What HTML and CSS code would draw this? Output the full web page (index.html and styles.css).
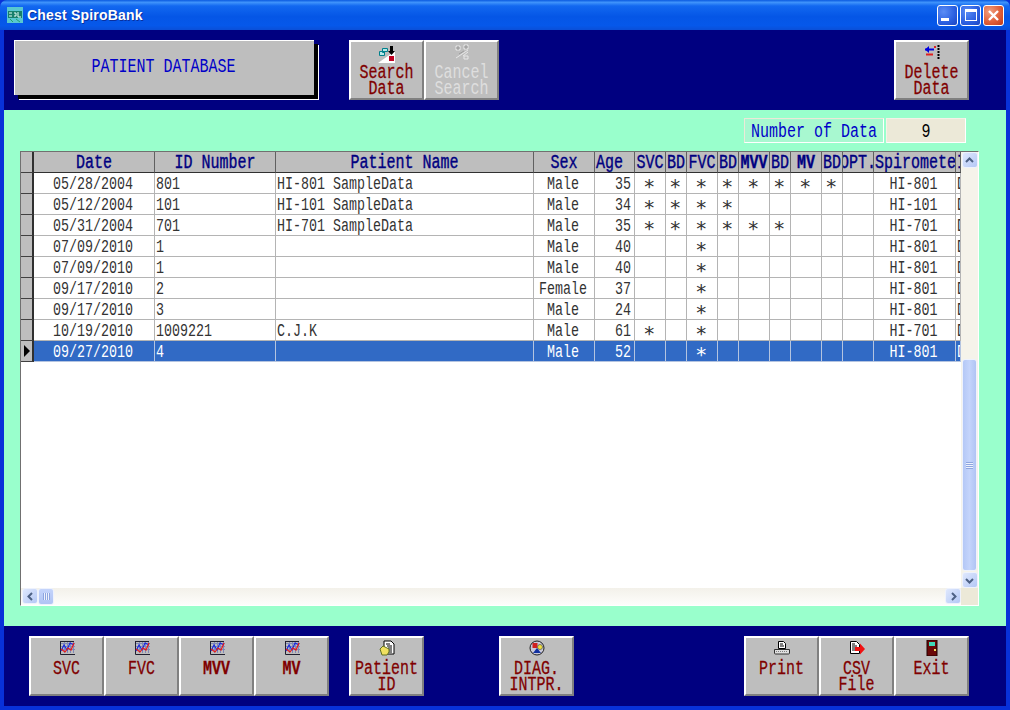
FILE: index.html
```html
<!DOCTYPE html>
<html lang="en">
<head>
    <meta charset="UTF-8">
    <title>Chest SpiroBank</title>
    <link rel="stylesheet" href="styles.css">
</head>
<body>
<svg class="defs" width="0" height="0">
    <symbol id="chart" viewBox="0 0 16 16">
        <path d="M2 3.500h14M2 6.500h14M2 9.500h14M5.500 1v12M8.500 1v12M11.500 1v12M14.500 1v12" stroke="#8088b8" stroke-width="1" fill="none"/>
        <path d="M1 1.500h14M1.500 1v13.500H16" stroke="#202030" stroke-width="1" fill="none"/>
        <path d="M2 11l3-6 3 5 3-7 4 2" stroke="#1828e0" stroke-width="1.200" fill="none"/>
        <path d="M2 9l4 3 3-4 3 2 3-7" stroke="#e81818" stroke-width="1.200" fill="none"/>
    </symbol>
</svg>
<div class="window">
    <div class="titlebar">
        <svg class="app-icon" width="16" height="16" viewBox="0 0 16 16">
            <rect width="16" height="16" fill="#58c8d0"/>
            <rect x="1" y="4" width="14" height="7" fill="#18806c"/>
            <path d="M2 6h3M2 9h3M7 6h2v3H7M11 5v5h3" stroke="#e8fff8" fill="none"/>
            <path d="M3 12l3 3M9 12l4 3" stroke="#20a070"/>
        </svg>
        <span class="title-text">Chest SpiroBank</span>
        <div class="win-buttons">
            <div class="win-btn"><span class="min-mark"></span></div>
            <div class="win-btn"><span class="max-mark"></span></div>
            <div class="win-btn win-close">
                <svg width="13" height="13" viewBox="0 0 13 13"><path d="M2 2l9 9M11 2l-9 9" stroke="#fff" stroke-width="2.400"/></svg>
            </div>
        </div>
    </div>

    <div class="top-band">
        <div class="db-title"><span class="tall">PATIENT DATABASE</span></div>
        <div class="tool-group">
            <button class="tool">
                <svg class="icon icon-big" viewBox="0 0 18 18">
                    <path d="M0 18L17 6v12z" fill="#fff"/>
                    <path d="M1.500 6.500h5v4h-5zM4.500 3.500h5v3h-3v1h-2z" fill="#b8e8e8" stroke="#00808c"/>
                    <path d="M12 1h3v5h2l-3.500 4L10 6h2z" fill="#000"/>
                    <rect x="11" y="11" width="5" height="5" fill="#c00020"/>
                </svg>
                <span class="label"><span class="tall">Search</span><span class="tall">Data</span></span>
            </button>
            <button class="tool tool-off">
                <svg class="icon" viewBox="0 0 16 16">
                    <path d="M2 2h4v4H2zM10 1h4v4h-4zM2 14L14 6M9 12l5-4M10 12h4v3h-4z" fill="none" stroke="#e8e8e8"/>
                    <path d="M3 3h2v2H3zM11 2h2v2h-2zM5 10l5-3" fill="none" stroke="#9c9c9c"/>
                </svg>
                <span class="label"><span class="tall">Cancel</span><span class="tall">Search</span></span>
            </button>
        </div>
        <button class="tool push-right">
            <svg class="icon" viewBox="0 0 16 16">
                <path d="M1 5.500h9" stroke="#0000e0" stroke-width="2"/>
                <path d="M5 2v7L1 5.500z" fill="#0000e0"/>
                <path d="M2 10.500h7" stroke="#e02020" stroke-width="2"/>
                <path d="M10 2h2v2h-2z" fill="#e02020"/>
                <path d="M14.500 1v14" stroke="#000" stroke-width="2" stroke-dasharray="2 1"/>
            </svg>
            <span class="label"><span class="tall">Delete</span><span class="tall">Data</span></span>
        </button>
    </div>

    <div class="main-panel">
        <div class="count-row">
            <div class="count-label"><span class="tall">Number of Data</span></div>
            <div class="count-value"><span class="tall">9</span></div>
        </div>
        <div class="grid-box">
            <div class="grid-main">
                <div class="table-area">
                    <table class="data-table">
                        <colgroup>
                            <col class="c-sel"><col class="c-date"><col class="c-date"><col class="c-name"><col class="c-sex"><col class="c-age">
                            <col class="c-wide"><col class="c-bd"><col class="c-wide"><col class="c-bd"><col class="c-wide"><col class="c-bd"><col class="c-wide"><col class="c-bd"><col class="c-wide">
                            <col class="c-spiro"><col class="c-last">
                        </colgroup>
                        <thead>
                            <tr>
                                <th class="sel"></th>
                                <th><span class="tall">Date</span></th>
                                <th><span class="tall">ID Number</span></th>
                                <th><span class="tall">Patient Name</span></th>
                                <th><span class="tall">Sex</span></th>
                                <th class="left"><span class="tall">Age</span></th>
                                <th class="tight"><span class="tall">SVC</span></th>
                                <th class="tight"><span class="tall">BD</span></th>
                                <th class="tight"><span class="tall">FVC</span></th>
                                <th class="tight"><span class="tall">BD</span></th>
                                <th class="tight heavy"><span class="tall">MVV</span></th>
                                <th class="tight"><span class="tall">BD</span></th>
                                <th class="tight heavy"><span class="tall">MV</span></th>
                                <th class="tight"><span class="tall">BD</span></th>
                                <th class="tight opt"><span class="tall">OPT.</span></th>
                                <th class="left"><span class="tall">Spirometer</span></th>
                                <th class="left"><span class="tall">I</span></th>
                            </tr>
                        </thead>
                        <tbody id="rows"></tbody>
                    </table>
                </div>
                <div class="vscroll">
                    <div class="sb-btn sb-up"><svg width="9" height="7" viewBox="0 0 9 7"><path d="M1 5l3.500-3.500L8 5" fill="none" stroke="#4d6185" stroke-width="2"/></svg></div>
                    <div class="v-track"></div>
                    <div class="v-thumb"><span class="grip"></span></div>
                    <div class="sb-btn sb-down"><svg width="9" height="7" viewBox="0 0 9 7"><path d="M1 2l3.500 3.500L8 2" fill="none" stroke="#4d6185" stroke-width="2"/></svg></div>
                </div>
            </div>
            <div class="hscroll">
                <div class="sb-btn h-btn"><svg width="7" height="9" viewBox="0 0 7 9"><path d="M5 1L1.500 4.500 5 8" fill="none" stroke="#4d6185" stroke-width="2"/></svg></div>
                <div class="h-thumb"><span class="grip-h"></span></div>
                <div class="h-track"></div>
                <div class="sb-btn h-btn"><svg width="7" height="9" viewBox="0 0 7 9"><path d="M2 1l3.500 3.500L2 8" fill="none" stroke="#4d6185" stroke-width="2"/></svg></div>
                <div class="corner"></div>
            </div>
        </div>
    </div>

    <div class="bottom-band">
        <div class="tool-group">
            <button class="tool"><svg class="icon"><use href="#chart"/></svg><span class="label"><span class="tall">SVC</span></span></button>
            <button class="tool"><svg class="icon"><use href="#chart"/></svg><span class="label"><span class="tall">FVC</span></span></button>
            <button class="tool"><svg class="icon"><use href="#chart"/></svg><span class="label heavy"><span class="tall">MVV</span></span></button>
            <button class="tool"><svg class="icon"><use href="#chart"/></svg><span class="label heavy"><span class="tall">MV</span></span></button>
        </div>
        <button class="tool gap-id">
            <svg class="icon" viewBox="0 0 16 16">
                <path d="M5 1h7l3 3v10H5z" fill="#fff" stroke="#000"/>
                <path d="M7 4h4M8 6h5M9 8h4M9 10h4M9 12h4" stroke="#000"/>
                <path d="M1 9l3-3 6 3v3l-2 3H3z" fill="#f0e060" stroke="#607020"/>
            </svg>
            <span class="label"><span class="tall">Patient</span><span class="tall">ID</span></span>
        </button>
        <button class="tool gap-diag">
            <svg class="icon" viewBox="0 0 16 16">
                <circle cx="8" cy="8" r="7" fill="#c8c8d8" stroke="#202020"/>
                <rect x="3.500" y="3" width="5" height="5" fill="#d02020"/>
                <circle cx="11" cy="7" r="2.500" fill="#f0e040" stroke="#404040" stroke-width=".6"/>
                <path d="M8 8l4 5H4z" fill="#1030a0"/>
            </svg>
            <span class="label"><span class="tall">DIAG.</span><span class="tall">INTPR.</span></span>
        </button>
        <div class="tool-group push-right">
            <button class="tool">
                <svg class="icon" viewBox="0 0 16 16">
                    <path d="M4.500 1.500h5l2 2v5h-7z" fill="#fff" stroke="#000"/>
                    <path d="M6 4h3M6 6h4" stroke="#000"/>
                    <path d="M.5 13V9.500h15V13a1 1 0 0 1-1 1h-13a1 1 0 0 1-1-1z" fill="#e0e0e0" stroke="#303030"/>
                    <path d="M2 11.500h12" stroke="#808080" stroke-dasharray="1 1"/>
                </svg>
                <span class="label"><span class="tall">Print</span></span>
            </button>
            <button class="tool">
                <svg class="icon" viewBox="0 0 16 16">
                    <path d="M1.500 1.500h6l3 3v9h-9z" fill="#fff" stroke="#000"/>
                    <path d="M3 4h3M3 6h5M3 8h3M3 10h3" stroke="#000"/>
                    <path d="M6 7h5V3.500L16 9l-5 5.500V11H6z" fill="#f01010"/>
                </svg>
                <span class="label"><span class="tall">CSV</span><span class="tall">File</span></span>
            </button>
            <button class="tool">
                <svg class="icon" viewBox="0 0 16 16">
                    <rect x="3" y="0" width="10" height="16" fill="#6a0808" stroke="#200000"/>
                    <rect x="5" y="2" width="6" height="4" fill="#40d8b8"/>
                    <rect x="10" y="9" width="2" height="2" fill="#f0e060"/>
                </svg>
                <span class="label"><span class="tall">Exit</span></span>
            </button>
        </div>
    </div>
</div>
<script>
    // date, id, name, sex, age, star columns (SVC BD FVC BD MVV BD MV BD OPT), model
    var data = [
        ["05/28/2004", "801", "HI-801 SampleData", "Male", "35", "11111111 ", "HI-801"],
        ["05/12/2004", "101", "HI-101 SampleData", "Male", "34", "1111     ", "HI-101"],
        ["05/31/2004", "701", "HI-701 SampleData", "Male", "35", "111111   ", "HI-701"],
        ["07/09/2010", "1", "", "Male", "40", "  1      ", "HI-801"],
        ["07/09/2010", "1", "", "Male", "40", "  1      ", "HI-801"],
        ["09/17/2010", "2", "", "Female", "37", "  1      ", "HI-801"],
        ["09/17/2010", "3", "", "Male", "24", "  1      ", "HI-801"],
        ["10/19/2010", "1009221", "C.J.K", "Male", "61", "1 1      ", "HI-701"],
        ["09/27/2010", "4", "", "Male", "52", "  1      ", "HI-801"]
    ];
    function cell(cls, text) {
        var inner = text ? '<span class="tall">' + text + '</span>' : '';
        return '<td class="' + cls + '">' + inner + '</td>';
    }
    var html = "";
    data.forEach(function (r, i) {
        var last = i === data.length - 1;
        html += '<tr' + (last ? ' class="current"' : '') + '>';
        html += '<td class="sel">' + (last ? '<span class="arrow"></span>' : '') + '</td>';
        html += cell("mid", r[0]) + cell("", r[1]) + cell("", r[2]) + cell("mid", r[3]) + cell("right", r[4]);
        for (var k = 0; k < 9; k++) {
            html += '<td class="mid star">' + (r[5][k] === "1" ? "∗" : "") + '</td>';
        }
        html += cell("mid", r[6]) + cell("", "D") + '</tr>';
    });
    document.getElementById("rows").innerHTML = html;
</script>
</body>
</html>
```

FILE: styles.css
```css
html, body {
    margin: 0;
    padding: 0;
    background: #0a3bc8;
}
.defs {
    position: absolute;
}
.window {
    width: 1010px;
    height: 710px;
    box-sizing: border-box;
    display: flex;
    flex-direction: column;
    border: 4px solid #0831d9;
    border-top: 0;
    font-family: "Liberation Mono", monospace;
    font-size: 15px;
}
/* the reference font is tall and narrow, so stretch the mono face */
.tall {
    display: inline-block;
    transform: translateY(2px) scaleY(1.32);
}

/* title bar */
.titlebar {
    height: 30px;
    margin: 0 -4px;
    padding: 0 6px 0 7px;
    display: flex;
    align-items: center;
    gap: 4px;
    border-radius: 7px 7px 0 0;
    background: linear-gradient(to bottom, #0a5ae0 0%, #3f93fb 8%, #1268f0 20%, #0556e6 55%, #0658ea 85%, #0a4fd8 100%);
}
.title-text {
    font-family: "Liberation Sans", sans-serif;
    font-size: 14px;
    font-weight: bold;
    letter-spacing: 0.2px;
    color: #fff;
    text-shadow: 1px 1px 0 #0a2f9c;
}
.win-buttons {
    margin-left: auto;
    display: flex;
    gap: 2px;
}
.win-btn {
    width: 19px;
    height: 19px;
    display: flex;
    align-items: center;
    justify-content: center;
    border: 1px solid #fff;
    border-radius: 3px;
    background: radial-gradient(circle at 30% 30%, #5a8cf5 0%, #2b5fe0 60%, #1c45c0 100%);
}
.win-close {
    background: radial-gradient(circle at 30% 30%, #f0a080 0%, #e0603a 55%, #c03a18 100%);
}
.min-mark {
    width: 8px;
    height: 3px;
    margin: 8px 6px 0 0;
    background: #fff;
}
.max-mark {
    width: 10px;
    height: 8px;
    border: 1px solid #fff;
    border-top-width: 3px;
}

/* navy bands and buttons */
.top-band {
    height: 80px;
    box-sizing: border-box;
    padding: 10px 37px 0 10px;
    display: flex;
    align-items: flex-start;
    background: #000080;
}
.bottom-band {
    flex: 1;
    box-sizing: border-box;
    padding: 10px 37px 0 25px;
    display: flex;
    align-items: flex-start;
    background: #000080;
}
.db-title {
    width: 299px;
    height: 54px;
    margin-right: 35px;
    display: flex;
    align-items: center;
    justify-content: center;
    color: #0000c8;
    background: #bebebe;
    border-top: 1px solid #fff;
    border-left: 1px solid #fff;
    box-shadow: 4px 4px 0 #000, 5px 5px 0 #fff;
}
.db-title .tall {
    margin: 0 2px 5px 0;
}
.tool-group {
    display: flex;
}
.tool {
    width: 75px;
    height: 60px;
    box-sizing: border-box;
    padding: 2px 0 0;
    display: flex;
    flex-direction: column;
    align-items: center;
    font: inherit;
    line-height: 16px;
    color: #800000;
    background: #bebebe;
    border: 2px solid;
    border-color: #fff #808080 #808080 #fff;
}
.label {
    display: flex;
    flex-direction: column;
    align-items: center;
    margin-top: 4px;
    -webkit-text-stroke: 0.2px #800000;
}
.label.heavy {
    font-weight: bold;
}
.tool-off {
    color: #dedede;
}
.tool-off .label {
    -webkit-text-stroke: 0;
}
.icon {
    width: 16px;
    height: 16px;
    flex: none;
}
.icon-big {
    width: 18px;
    height: 18px;
    margin: 1px 0 -3px;
}
.push-right {
    margin-left: auto;
}
.gap-id {
    margin-left: 20px;
}
.gap-diag {
    margin-left: 75px;
}

/* mint panel */
.main-panel {
    height: 516px;
    box-sizing: border-box;
    padding: 8px 27px 20px 16px;
    background: #99ffcc;
}
.count-row {
    height: 25px;
    margin: 0 13px 8px 0;
    display: flex;
    justify-content: flex-end;
    gap: 2px;
}
.count-label {
    width: 140px;
    box-sizing: border-box;
    display: flex;
    align-items: center;
    justify-content: center;
    color: #0000c8;
    background: #a8f8d0;
    border: 1px solid;
    border-color: #ece9d8 #fff #fff #ece9d8;
}
.count-value {
    width: 80px;
    box-sizing: border-box;
    display: flex;
    align-items: center;
    justify-content: center;
    color: #000;
    background: #ece9d8;
    border: 1px solid;
    border-color: #f4f2e8 #fff #fff #f4f2e8;
}

/* data grid */
.grid-box {
    width: 959px;
    height: 455px;
    box-sizing: border-box;
    display: flex;
    flex-direction: column;
    background: #fff;
    border: 1px solid;
    border-color: #707070 #fff #fff #707070;
}
.grid-main {
    height: 436px;
    display: flex;
}
.table-area {
    width: 940px;
    overflow: hidden;
}
.data-table {
    width: 940px;
    table-layout: fixed;
    border-collapse: separate;
    border-spacing: 0;
}
.c-sel { width: 13px; }
.c-date { width: 121px; }
.c-name { width: 258px; }
.c-sex { width: 61px; }
.c-age { width: 40px; }
.c-wide { width: 31px; }
.c-bd { width: 21px; }
.c-spiro { width: 82px; }
.c-last { width: 5px; }
.data-table th, .data-table td {
    height: 21px;
    box-sizing: border-box;
    padding: 0;
    overflow: hidden;
    white-space: nowrap;
    line-height: 20px;
}
.data-table th {
    font-weight: normal;
    color: #000080;
    text-align: center;
    background: #bebebe;
    border-right: 1px solid #606060;
    border-bottom: 1px solid #303030;
    -webkit-text-stroke: 0.3px #000080;
}
.data-table th.left {
    text-align: left;
    padding-left: 1px;
}
.data-table th.heavy {
    font-weight: bold;
}
.data-table th.opt {
    text-align: left;
}
.opt .tall {
    margin-left: -3px;
}
.data-table td {
    font-size: 13.333px;
    color: #333;
    padding-left: 1px;
    border-right: 1px solid #b4b4b4;
    border-bottom: 1px solid #b4b4b4;
}
.data-table th.sel, .data-table td.sel {
    padding: 0;
    background: #bebebe;
    border-right: 2px solid #303030;
    border-bottom: 1px solid #404040;
}
.data-table td.mid {
    text-align: center;
    padding: 0 2px 0 0;
}
.data-table td.right {
    text-align: right;
    padding-right: 3px;
}
.data-table td.star {
    font-family: "DejaVu Sans Mono", monospace;
    font-size: 20px;
    line-height: 19px;
}
.data-table tr.current td {
    color: #fff;
    background: #316ac5;
    border-color: #b4c4e0;
}
.data-table tr.current td.sel {
    background: #bebebe;
    border-color: #303030;
    border-bottom-color: #404040;
}
.arrow {
    display: block;
    width: 0;
    height: 0;
    margin-left: 3px;
    border-left: 6px solid #000;
    border-top: 6px solid transparent;
    border-bottom: 6px solid transparent;
}

/* scrollbars */
.vscroll {
    width: 17px;
    position: relative;
    display: flex;
    flex-direction: column;
    background: #f5f3ea;
}
.v-track {
    flex: 1;
}
.v-thumb {
    position: absolute;
    left: 1px;
    right: 1px;
    top: 207px;
    height: 212px;
    display: flex;
    align-items: center;
    justify-content: center;
    box-sizing: border-box;
    background: linear-gradient(to right, #b4c8f6, #c4d4fb 50%, #b0c4f4);
    border: 1px solid #eef2fd;
    border-radius: 3px;
}
.grip {
    width: 7px;
    height: 7px;
    background: repeating-linear-gradient(to bottom, #8ea6e0 0, #8ea6e0 1px, #eef2fd 1px, #eef2fd 2px);
}
.sb-btn {
    width: 16px;
    height: 16px;
    box-sizing: border-box;
    display: flex;
    align-items: center;
    justify-content: center;
    flex: none;
    background: linear-gradient(135deg, #dfe8fd, #b4c8f6);
    border: 1px solid #eef2fd;
    border-radius: 3px;
}
.sb-up, .sb-down {
    margin-left: 0.5px;
}
.hscroll {
    height: 17px;
    display: flex;
    padding-left: 1px;
    background: linear-gradient(to bottom, #f3f1ea, #fdfdfb);
}
.h-thumb {
    width: 16px;
    box-sizing: border-box;
    display: flex;
    align-items: center;
    justify-content: center;
    background: linear-gradient(to bottom, #c4d4fb, #b0c4f4);
    border: 1px solid #eef2fd;
    border-radius: 3px;
}
.grip-h {
    width: 7px;
    height: 7px;
    background: repeating-linear-gradient(to right, #8ea6e0 0, #8ea6e0 1px, #eef2fd 1px, #eef2fd 2px);
}
.h-track {
    flex: 1;
}
.corner {
    width: 17px;
    background: #ece9d8;
}
```
